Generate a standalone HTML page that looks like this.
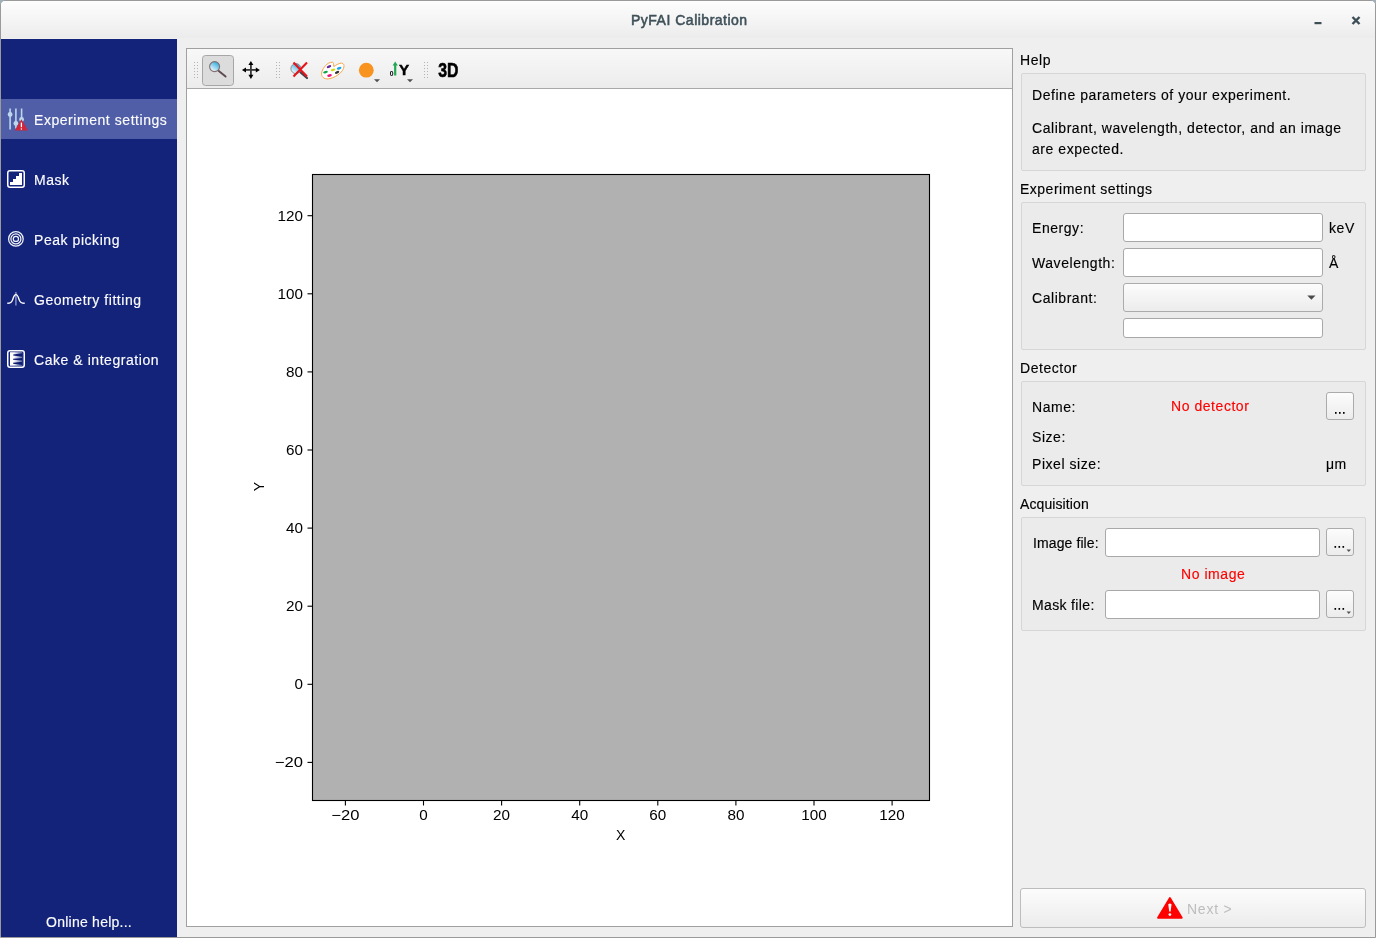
<!DOCTYPE html>
<html><head><meta charset="utf-8">
<style>
html,body{margin:0;padding:0;}
body{width:1376px;height:938px;overflow:hidden;position:relative;background:#efefef;font-family:"Liberation Sans",sans-serif;color:#000;}
.a{position:absolute;}
.t{position:absolute;will-change:transform;-webkit-text-stroke:0.15px currentColor;font-size:14px;line-height:14px;white-space:nowrap;letter-spacing:0.55px;}
#win{left:0;top:0;width:1374px;height:936px;border:1px solid #9a9a9a;border-radius:5px 5px 0 0;background:#efefef;}
#title{left:1px;top:1px;width:1374px;height:37px;background:linear-gradient(#fdfdfd,#f3f3f3 60%,#ececec);border-radius:4px 4px 0 0;}
#side{left:1px;top:39px;width:176px;height:898px;background:#13237a;}
.sel{left:1px;top:99px;width:176px;height:40px;background:#4f5ea6;}
.st{color:#fcfcfc;}
#frame{left:186px;top:48px;width:825px;height:877px;border:1px solid #a0a0a0;background:#fff;}
#tb{left:0;top:0;width:825px;height:39px;background:linear-gradient(#f8f8f8,#ececec);border-bottom:1px solid #a9a9a9;}
.grp{position:absolute;left:1021px;width:343px;border:1px solid #d6d6d6;border-radius:2px;background:#ebebeb;}
.inp{position:absolute;background:#fff;border:1px solid #a9a9a9;border-radius:3px;box-sizing:border-box;}
.btn{position:absolute;background:linear-gradient(#fcfcfc,#ececec);border:1px solid #ababab;border-radius:3px;box-sizing:border-box;}
</style></head><body>
<div class="a" style="left:0;top:0;width:5px;height:5px;background:#9fb0bd;"></div>
<div class="a" style="left:1371px;top:0;width:5px;height:5px;background:#9fb0bd;"></div>
<div id="win" class="a"></div>
<div id="title" class="a"></div>
<div class="t" style="left:631px;top:13px;font-weight:normal;color:#3f5059;font-size:14px;letter-spacing:0.5px;-webkit-text-stroke:0.55px currentColor;">PyFAI Calibration</div>

<div id="side" class="a"></div>
<div class="a sel"></div>
<div class="t st" style="left:34px;top:113px;">Experiment settings</div>
<div class="t st" style="left:34px;top:173px;">Mask</div>
<div class="t st" style="left:34px;top:233px;">Peak picking</div>
<div class="t st" style="left:34px;top:293px;">Geometry fitting</div>
<div class="t st" style="left:34px;top:353px;">Cake &amp; integration</div>
<div class="t st" style="left:46px;top:915px;letter-spacing:0.25px;">Online help...</div>

<div id="frame" class="a">
  <div id="tb" class="a"></div>
</div>

<!-- right panel -->
<div class="t" style="left:1020px;top:53px;">Help</div>
<div class="grp" style="top:73px;height:96px;"></div>
<div class="t" style="left:1032px;top:88px;">Define parameters of your experiment.</div>
<div class="t" style="left:1032px;top:121px;">Calibrant, wavelength, detector, and an image</div>
<div class="t" style="left:1032px;top:142px;">are expected.</div>

<div class="t" style="left:1020px;top:182px;letter-spacing:0.5px;">Experiment settings</div>
<div class="grp" style="top:202px;height:146px;"></div>
<div class="t" style="left:1032px;top:221px;">Energy:</div>
<div class="t" style="left:1032px;top:256px;">Wavelength:</div>
<div class="t" style="left:1032px;top:291px;">Calibrant:</div>
<div class="inp" style="left:1123px;top:213px;width:200px;height:29px;"></div>
<div class="inp" style="left:1123px;top:248px;width:200px;height:29px;"></div>
<div class="btn" style="left:1123px;top:283px;width:200px;height:29px;"></div>
<div class="inp" style="left:1123px;top:318px;width:200px;height:20px;"></div>
<div class="t" style="left:1329px;top:221px;">keV</div>
<div class="t" style="left:1329px;top:256px;">Å</div>

<div class="t" style="left:1020px;top:361px;">Detector</div>
<div class="grp" style="top:381px;height:103px;"></div>
<div class="t" style="left:1032px;top:400px;">Name:</div>
<div class="t" style="left:1171px;top:399px;color:#ff0000;">No detector</div>
<div class="btn" style="left:1326px;top:392px;width:28px;height:28px;"></div>
<div class="t" style="left:1032px;top:430px;">Size:</div>
<div class="t" style="left:1032px;top:457px;">Pixel size:</div>
<div class="t" style="left:1326px;top:457px;">μm</div>

<div class="t" style="left:1020px;top:497px;letter-spacing:0.1px;">Acquisition</div>
<div class="grp" style="top:517px;height:112px;"></div>
<div class="t" style="left:1033px;top:536px;letter-spacing:0.1px;">Image file:</div>
<div class="inp" style="left:1105px;top:528px;width:215px;height:29px;"></div>
<div class="btn" style="left:1326px;top:528px;width:28px;height:28px;"></div>
<div class="t" style="left:1181px;top:567px;color:#ff0000;">No image</div>
<div class="t" style="left:1032px;top:598px;letter-spacing:0.35px;">Mask file:</div>
<div class="inp" style="left:1105px;top:590px;width:215px;height:29px;"></div>
<div class="btn" style="left:1326px;top:590px;width:28px;height:28px;"></div>

<div class="btn" style="left:1020px;top:888px;width:346px;height:40px;border-color:#bdbdbd;"></div>
<div class="t" style="left:1187px;top:902px;color:#bdbdbd;letter-spacing:0.75px;-webkit-text-stroke:0;">Next &gt;</div>
<svg class="a" style="left:0;top:0;will-change:transform;" width="1376" height="938" viewBox="0 0 1376 938">
<defs>
<style>.pl{font-family:"Liberation Sans",sans-serif;font-size:14px;fill:#000;}</style>
<linearGradient id="lens" x1="0.75" y1="0.15" x2="0.25" y2="0.9"><stop offset="0" stop-color="#3fb2e2"/><stop offset="1" stop-color="#eef7fb"/></linearGradient>
<linearGradient id="wedge" x1="0" x2="1" y1="0" y2="0"><stop offset="0" stop-color="#fff"/><stop offset="0.3" stop-color="#fff"/><stop offset="1" stop-color="#fff" stop-opacity="0.35"/></linearGradient>
</defs>
<!-- title buttons -->
<rect x="1314.5" y="22" width="7" height="2.2" fill="#3d4e57"/>
<path d="M1352.5 17 L1359.5 24 M1359.5 17 L1352.5 24" stroke="#3d4e57" stroke-width="2.4"/>

<!-- sidebar icons -->
<g stroke="#bcd6ec" stroke-width="1.6" fill="#bcd6ec">
<line x1="10.1" y1="108.5" x2="10.1" y2="129.5"/>
<line x1="15.9" y1="108.5" x2="15.9" y2="128.5"/>
<line x1="21.6" y1="108.5" x2="21.6" y2="122"/>
<circle cx="10.1" cy="114.5" r="2.4" stroke="none"/>
<circle cx="15.9" cy="123.4" r="2.4" stroke="none"/>
<circle cx="21.6" cy="119.4" r="2.4" stroke="none"/>
</g>
<path d="M21.4 119.2 L28 130.6 L14.8 130.6 Z" fill="#d0253a"/>
<path d="M21.4 122.6 L21.4 127.2" stroke="#fff" stroke-width="1.3"/>
<circle cx="21.4" cy="128.9" r="0.75" fill="#fff"/>

<rect x="7.75" y="170.75" width="16.5" height="16.5" rx="2.2" fill="none" stroke="#fff" stroke-width="1.5"/>
<path d="M10 185 L10 182 L13 182 L13 179 L16 179 L16 176 L19 176 L19 173 L22 173 L22 185 Z" fill="#fff"/>

<g fill="none" stroke="#f2f3f8" stroke-width="1.25">
<circle cx="15.9" cy="238.9" r="7.3"/>
<circle cx="15.9" cy="238.9" r="5"/>
<circle cx="15.9" cy="238.9" r="2.6"/>
</g>

<line x1="15.9" y1="292" x2="15.9" y2="305.5" stroke="#8088c0" stroke-width="1.6"/>
<path d="M7.3 303.3 C10.5 303.3 11.9 302.2 12.7 299.6 C13.6 296.5 14.4 294.6 15.9 294.6 C17.4 294.6 18.2 296.5 19.1 299.6 C19.9 302.2 21.3 303.3 24.7 303.3" fill="none" stroke="#fff" stroke-width="1.4"/>

<rect x="7.75" y="350.75" width="16.5" height="16.5" rx="2.2" fill="none" stroke="#fff" stroke-width="1.5"/>
<rect x="10" y="352.2" width="12.2" height="13.5" fill="url(#wedge)"/>
<path d="M13.2 354.6 L22.2 353.3 L22.2 356.8 L13.2 355.6 Z M13.1 358.7 L22.2 357.9 L22.2 360.6 L13.1 359.7 Z M13.1 362.7 L22.2 361.8 L22.2 364.9 L13.1 363.7 Z" fill="#0c1c72"/>

<!-- toolbar -->
<g fill="#b4b4b4">
<rect x="194" y="62" width="1" height="1"/><rect x="197" y="62" width="1" height="1"/>
<rect x="194" y="65" width="1" height="1"/><rect x="197" y="65" width="1" height="1"/>
<rect x="194" y="68" width="1" height="1"/><rect x="197" y="68" width="1" height="1"/>
<rect x="194" y="71" width="1" height="1"/><rect x="197" y="71" width="1" height="1"/>
<rect x="194" y="74" width="1" height="1"/><rect x="197" y="74" width="1" height="1"/>
<rect x="194" y="77" width="1" height="1"/><rect x="197" y="77" width="1" height="1"/>
</g>
<g fill="#b4b4b4">
<rect x="276" y="62" width="1" height="1"/><rect x="279" y="62" width="1" height="1"/>
<rect x="276" y="65" width="1" height="1"/><rect x="279" y="65" width="1" height="1"/>
<rect x="276" y="68" width="1" height="1"/><rect x="279" y="68" width="1" height="1"/>
<rect x="276" y="71" width="1" height="1"/><rect x="279" y="71" width="1" height="1"/>
<rect x="276" y="74" width="1" height="1"/><rect x="279" y="74" width="1" height="1"/>
<rect x="276" y="77" width="1" height="1"/><rect x="279" y="77" width="1" height="1"/>
</g>
<g fill="#b4b4b4">
<rect x="424" y="62" width="1" height="1"/><rect x="427" y="62" width="1" height="1"/>
<rect x="424" y="65" width="1" height="1"/><rect x="427" y="65" width="1" height="1"/>
<rect x="424" y="68" width="1" height="1"/><rect x="427" y="68" width="1" height="1"/>
<rect x="424" y="71" width="1" height="1"/><rect x="427" y="71" width="1" height="1"/>
<rect x="424" y="74" width="1" height="1"/><rect x="427" y="74" width="1" height="1"/>
<rect x="424" y="77" width="1" height="1"/><rect x="427" y="77" width="1" height="1"/>
</g>
<rect x="202.5" y="55.5" width="31" height="30" rx="3" fill="#dcdcdc" stroke="#a6a6a6"/>
<line x1="218.5" y1="70.8" x2="225.6" y2="76.6" stroke="#5e4a50" stroke-width="1.9" stroke-linecap="round"/>
<circle cx="214.6" cy="66.6" r="5" fill="url(#lens)" stroke="#807070" stroke-width="1.1"/>

<g fill="#383838">
<rect x="250" y="64" width="1.8" height="12"/>
<rect x="245" y="69" width="12" height="1.8"/>
</g>
<g fill="#000">
<path d="M250.9 60.9 L253.4 65 L248.4 65 Z"/>
<path d="M250.9 78.9 L253.4 74.8 L248.4 74.8 Z"/>
<path d="M241.9 69.9 L246 67.4 L246 72.4 Z"/>
<path d="M259.9 69.9 L255.8 67.4 L255.8 72.4 Z"/>
</g>

<line x1="299.5" y1="71.5" x2="307" y2="78" stroke="#404048" stroke-width="2.2" stroke-linecap="round"/>
<circle cx="295.9" cy="68.6" r="5" fill="url(#lens)" stroke="#8c8c8c" stroke-width="1"/>
<path d="M293.5 62.5 L307 76.5 M307 62.5 L293.5 76.5" stroke="#e8141c" stroke-width="2.1"/>

<path d="M332.4 62.2 C333.6 62.3 333.6 64 333.8 66.6 C336 65 339.5 63 341.6 63.1 C343.5 63.2 344.3 64.8 343.9 67 C343.3 71 338 76.5 330 78.6 C325 79.8 322 77.5 321.6 74.6 C321.2 71 324.5 65.5 328.5 63.2 C330 62.4 331.5 62.1 332.4 62.2 Z" fill="#fff" stroke="#f5a445" stroke-width="1"/>
<ellipse cx="329" cy="66.6" rx="2.4" ry="1.25" transform="rotate(-22 329 66.6)" fill="#66289a"/>
<ellipse cx="339.2" cy="68.3" rx="2.4" ry="1.25" transform="rotate(-18 339.2 68.3)" fill="#18a6e8"/>
<ellipse cx="333.1" cy="69.9" rx="2.4" ry="1.2" transform="rotate(-15 333.1 69.9)" fill="#cfdc14"/>
<ellipse cx="325.5" cy="72.1" rx="2.4" ry="1.25" transform="rotate(-15 325.5 72.1)" fill="#0ca44a"/>
<ellipse cx="337.1" cy="72.4" rx="2.3" ry="1.3" transform="rotate(-22 337.1 72.4)" fill="#333"/>
<ellipse cx="329.5" cy="75.5" rx="2.4" ry="1.25" transform="rotate(-15 329.5 75.5)" fill="#e8107a"/>

<circle cx="366.3" cy="70.2" r="7.4" fill="#f7931e"/>
<path d="M374 79.2 L380 79.2 L377 82.2 Z" fill="#505050"/>

<rect x="394.1" y="64.5" width="2.2" height="11" fill="#22a852"/>
<path d="M395.2 61.6 L397.8 65.6 L392.6 65.6 Z" fill="#22a852"/>
<text x="389.8" y="75.5" textLength="3.8" lengthAdjust="spacingAndGlyphs" style="font-family:'Liberation Sans';font-size:6.6px;font-weight:bold;">0</text>
<text x="399" y="75.4" textLength="10.2" lengthAdjust="spacingAndGlyphs" style="font-family:'Liberation Sans';font-size:14.2px;font-weight:bold;stroke:#000;stroke-width:0.45px;">Y</text>
<path d="M407 79.2 L413 79.2 L410 82.2 Z" fill="#505050"/>

<text x="438.2" y="76.9" textLength="20.2" lengthAdjust="spacingAndGlyphs" style="font-family:'Liberation Sans';font-size:20px;font-weight:bold;stroke:#000;stroke-width:0.6px;">3D</text>

<!-- plot -->
<rect x="312.5" y="174.5" width="617" height="626" fill="#b1b1b1" stroke="#000" stroke-width="1.1"/>
<line x1="345.4" y1="800.5" x2="345.4" y2="805.5" stroke="#000" stroke-width="1.1"/>
<text x="345.4" y="820" text-anchor="middle" textLength="28.13" lengthAdjust="spacingAndGlyphs" class="pl">−20</text>
<line x1="423.5" y1="800.5" x2="423.5" y2="805.5" stroke="#000" stroke-width="1.1"/>
<text x="423.5" y="820" text-anchor="middle" textLength="8.48" lengthAdjust="spacingAndGlyphs" class="pl">0</text>
<line x1="501.6" y1="800.5" x2="501.6" y2="805.5" stroke="#000" stroke-width="1.1"/>
<text x="501.6" y="820" text-anchor="middle" textLength="16.96" lengthAdjust="spacingAndGlyphs" class="pl">20</text>
<line x1="579.7" y1="800.5" x2="579.7" y2="805.5" stroke="#000" stroke-width="1.1"/>
<text x="579.7" y="820" text-anchor="middle" textLength="16.96" lengthAdjust="spacingAndGlyphs" class="pl">40</text>
<line x1="657.8" y1="800.5" x2="657.8" y2="805.5" stroke="#000" stroke-width="1.1"/>
<text x="657.8" y="820" text-anchor="middle" textLength="16.96" lengthAdjust="spacingAndGlyphs" class="pl">60</text>
<line x1="735.9" y1="800.5" x2="735.9" y2="805.5" stroke="#000" stroke-width="1.1"/>
<text x="735.9" y="820" text-anchor="middle" textLength="16.96" lengthAdjust="spacingAndGlyphs" class="pl">80</text>
<line x1="814.0" y1="800.5" x2="814.0" y2="805.5" stroke="#000" stroke-width="1.1"/>
<text x="814.0" y="820" text-anchor="middle" textLength="25.44" lengthAdjust="spacingAndGlyphs" class="pl">100</text>
<line x1="892.1" y1="800.5" x2="892.1" y2="805.5" stroke="#000" stroke-width="1.1"/>
<text x="892.1" y="820" text-anchor="middle" textLength="25.44" lengthAdjust="spacingAndGlyphs" class="pl">120</text>
<line x1="307.5" y1="762.4" x2="312.5" y2="762.4" stroke="#000" stroke-width="1.1"/>
<text x="303" y="767.4" text-anchor="end" textLength="28.13" lengthAdjust="spacingAndGlyphs" class="pl">−20</text>
<line x1="307.5" y1="684.3" x2="312.5" y2="684.3" stroke="#000" stroke-width="1.1"/>
<text x="303" y="689.3" text-anchor="end" textLength="8.48" lengthAdjust="spacingAndGlyphs" class="pl">0</text>
<line x1="307.5" y1="606.2" x2="312.5" y2="606.2" stroke="#000" stroke-width="1.1"/>
<text x="303" y="611.2" text-anchor="end" textLength="16.96" lengthAdjust="spacingAndGlyphs" class="pl">20</text>
<line x1="307.5" y1="528.1" x2="312.5" y2="528.1" stroke="#000" stroke-width="1.1"/>
<text x="303" y="533.1" text-anchor="end" textLength="16.96" lengthAdjust="spacingAndGlyphs" class="pl">40</text>
<line x1="307.5" y1="450.0" x2="312.5" y2="450.0" stroke="#000" stroke-width="1.1"/>
<text x="303" y="455.0" text-anchor="end" textLength="16.96" lengthAdjust="spacingAndGlyphs" class="pl">60</text>
<line x1="307.5" y1="371.9" x2="312.5" y2="371.9" stroke="#000" stroke-width="1.1"/>
<text x="303" y="376.9" text-anchor="end" textLength="16.96" lengthAdjust="spacingAndGlyphs" class="pl">80</text>
<line x1="307.5" y1="293.8" x2="312.5" y2="293.8" stroke="#000" stroke-width="1.1"/>
<text x="303" y="298.8" text-anchor="end" textLength="25.44" lengthAdjust="spacingAndGlyphs" class="pl">100</text>
<line x1="307.5" y1="215.7" x2="312.5" y2="215.7" stroke="#000" stroke-width="1.1"/>
<text x="303" y="220.7" text-anchor="end" textLength="25.44" lengthAdjust="spacingAndGlyphs" class="pl">120</text>
<text x="620.7" y="840" text-anchor="middle" class="pl">X</text>
<text transform="translate(264,486.7) rotate(-90)" x="0" y="0" text-anchor="middle" class="pl">Y</text>

<!-- combo arrow -->
<path d="M1307.3 295.5 L1315.5 295.5 L1311.4 299.7 Z" fill="#4a4a4a"/>
<!-- button dots -->
<g fill="#000">
<rect x="1335" y="412" width="1.6" height="1.8"/><rect x="1339" y="412" width="1.6" height="1.8"/><rect x="1343" y="412" width="1.6" height="1.8"/>
<rect x="1334.5" y="546" width="1.6" height="1.8"/><rect x="1338.5" y="546" width="1.6" height="1.8"/><rect x="1342.5" y="546" width="1.6" height="1.8"/>
<rect x="1334.5" y="608" width="1.6" height="1.8"/><rect x="1338.5" y="608" width="1.6" height="1.8"/><rect x="1342.5" y="608" width="1.6" height="1.8"/>
</g>
<path d="M1346.5 549.5 L1351 549.5 L1348.8 552 Z M1346.5 611.5 L1351 611.5 L1348.8 614 Z" fill="#555"/>
<!-- next warning -->
<path d="M1169.9 898 L1181.8 917.8 L1158 917.8 Z" fill="#ff0000" stroke="#ff0000" stroke-width="1.8" stroke-linejoin="round"/>
<path d="M1168.3 904.2 Q1169.9 902.6 1171.5 904.2 L1170.6 911.6 L1169.2 911.6 Z" fill="#fff"/>
<circle cx="1169.9" cy="914.6" r="1.4" fill="#fff"/>
</svg>
</body></html>
